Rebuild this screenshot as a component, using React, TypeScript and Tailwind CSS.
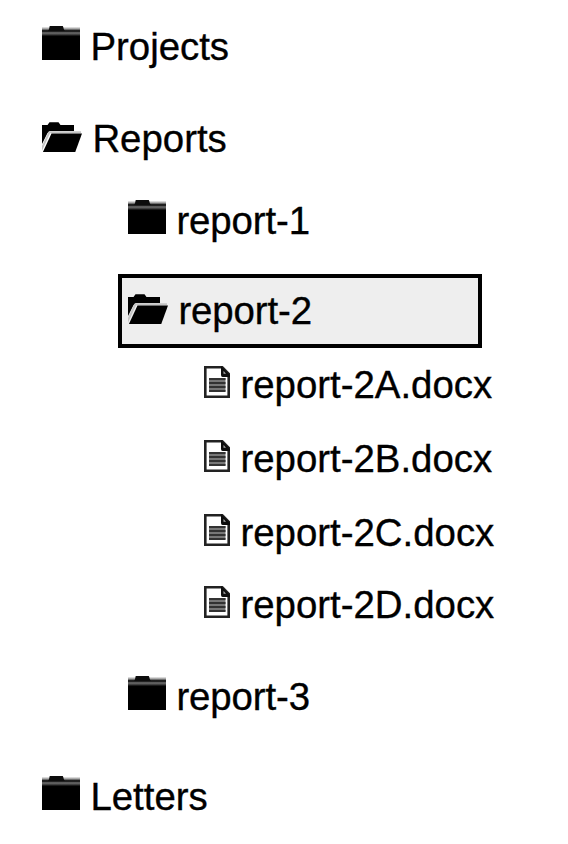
import type { ReactNode } from "react";

function FolderIcon() {
  return (
    <svg width="38" height="34" viewBox="0 0 38 34" className="shrink-0">
      <defs>
        <linearGradient id="folderShade" x1="0" y1="0" x2="0" y2="34" gradientUnits="userSpaceOnUse">
          <stop offset="0.03" stopColor="#eee" />
          <stop offset="0.07" stopColor="#b4b4b4" />
          <stop offset="0.1" stopColor="#777" />
          <stop offset="0.135" stopColor="#181818" />
          <stop offset="0.165" stopColor="#222" />
          <stop offset="0.2" stopColor="#6c6c6c" />
          <stop offset="0.235" stopColor="#555" />
          <stop offset="0.27" stopColor="#222" />
          <stop offset="0.31" stopColor="#000" />
        </linearGradient>
        <filter id="tabSoft">
          <feGaussianBlur stdDeviation="0.5" />
        </filter>
      </defs>
      <rect y="1" width="38" height="33" fill="url(#folderShade)" />
      <path d="M6.5 5 L8 -1 H20.5 L22.5 5Z" fill="#0c0c0c" filter="url(#tabSoft)" />
    </svg>
  );
}

function OpenFolderIcon() {
  return (
    <svg width="40" height="30" viewBox="0 0 40 30" className="shrink-0">
      <defs>
        <filter id="openSoft" x="-4" y="-4" width="48" height="40" filterUnits="userSpaceOnUse">
          <feGaussianBlur stdDeviation="0.6" />
        </filter>
      </defs>
      <g filter="url(#openSoft)">
        <path d="M-2 3 H5.5 L7.5 0.3 H16.5 L18.5 3 H32 V9 H8 L5.5 11 L0 22 H-2Z" fill="#050505" />
        <path d="M-1 28.5 L7.5 10.2 H39" fill="none" stroke="#c4c4c4" strokeWidth="2" />
        <path d="M9.5 11.6 H40 L32.5 32 H0Z" fill="#000" />
      </g>
    </svg>
  );
}

function DocumentIcon() {
  return (
    <svg width="26" height="32" viewBox="0 0 26 32" className="shrink-0">
      <defs>
        <filter id="docSoft" x="-4" y="-4" width="34" height="40" filterUnits="userSpaceOnUse">
          <feGaussianBlur stdDeviation="0.6" />
        </filter>
      </defs>
      <g filter="url(#docSoft)">
        <path d="M1.2 1.2 H18 L24.8 8 V30.8 H1.2Z" fill="#fff" stroke="#222" strokeWidth="2.8" />
        <path d="M17 0 L26 8.5 V11 H18.5 Q17 11 17 9Z" fill="#111" />
        <path d="M19.5 5 L22 7.8 H19.5Z" fill="#aaa" />
        <rect x="5" y="12" width="16.5" height="13.5" fill="#777" />
        <path d="M5 13 H21.5 M5 17 H21.5 M5 21 H21.5 M5 25 H21.5" stroke="#333" strokeWidth="2.2" />
      </g>
    </svg>
  );
}

function Item({ icon, label, className = "" }: { icon: ReactNode; label: string; className?: string }) {
  return (
    <div className={`flex items-baseline gap-[10.4px] whitespace-nowrap leading-[44px] ${className}`}>
      {icon}
      <span className="[-webkit-text-stroke:0.35px_black]">{label}</span>
    </div>
  );
}

export default function App() {
  return (
    <main className="h-[844px] w-[568px] overflow-hidden bg-white pt-[25px] pl-[42px] font-['Liberation_Sans',Arial,sans-serif] text-[38.4px] text-black">
      <Item icon={<FolderIcon />} label="Projects" />
      <Item icon={<OpenFolderIcon />} label="Reports" className="mt-12" />
      <div className="pl-[86px]">
        <Item icon={<FolderIcon />} label="report-1" className="mt-[38px] tracking-[-0.1px]" />
        <Item
          icon={<OpenFolderIcon />}
          label="report-2"
          className="mt-[31px] -ml-[10px] h-[74px] w-[364px] border-4 border-black bg-[#eeeeee] px-1.5 pt-[11px] tracking-[-0.1px]"
        />
        <div className="mt-[15px] flex flex-col gap-[30px] pl-[76px]">
          <Item icon={<DocumentIcon />} label="report-2A.docx" />
          <Item icon={<DocumentIcon />} label="report-2B.docx" />
          <Item icon={<DocumentIcon />} label="report-2C.docx" />
          <Item icon={<DocumentIcon />} label="report-2D.docx" className="-mt-0.5" />
        </div>
        <Item icon={<FolderIcon />} label="report-3" className="mt-12 tracking-[-0.1px]" />
      </div>
      <Item icon={<FolderIcon />} label="Letters" className="mt-14" />
    </main>
  );
}
